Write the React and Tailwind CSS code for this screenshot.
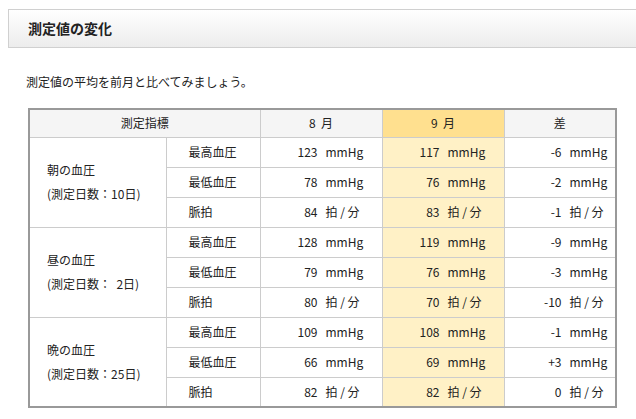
const groups = [
  { name: "朝の血圧", days: "(測定日数：10日)", rows: [
    ["最高血圧", "123", "117", "-6", "mmHg"],
    ["最低血圧", "78", "76", "-2", "mmHg"],
    ["脈拍", "84", "83", "-1", "拍 / 分"]] },
  { name: "昼の血圧", days: "(測定日数：\u00a0 2日)", rows: [
    ["最高血圧", "128", "119", "-9", "mmHg"],
    ["最低血圧", "79", "76", "-3", "mmHg"],
    ["脈拍", "80", "70", "-10", "拍 / 分"]] },
  { name: "晩の血圧", days: "(測定日数：25日)", rows: [
    ["最高血圧", "109", "108", "-1", "mmHg"],
    ["最低血圧", "66", "69", "+3", "mmHg"],
    ["脈拍", "82", "82", "0", "拍 / 分"]] },
];

function Val({ n, u }) {
  return (
    <div className="flex items-center">
      <span className="w-[57px] text-right">{n}</span>
      <span className="ml-[8px]">{u}</span>
    </div>
  );
}

export default function App() {
  const font = { fontFamily: '"Noto Sans CJK JP", "Liberation Sans", sans-serif' };
  return (
    <div className="w-[636px] h-[419px] bg-white overflow-hidden text-[12px] text-[#222]" style={font}>
      <div className="ml-[8px] mt-[9px] w-[640px] h-[39px] border border-[#d0d0d0] bg-gradient-to-b from-white to-[#ececec] flex items-center pl-[19px]">
        <span className="text-[14px] font-bold text-[#222]">測定値の変化</span>
      </div>
      <div className="ml-[26px] mt-[26px] h-[16px] leading-[16px]">測定値の平均を前月と比べてみましょう。</div>
      <table className="ml-[28px] mt-[18px] border-collapse border-2 border-[#999] w-[589px]">
        <thead>
          <tr className="h-[28px]">
            <th colSpan={2} className="border border-[#ccc] bg-[#f5f5f5] font-normal w-[231px]">測定指標</th>
            <th className="border border-[#ccc] bg-[#f5f5f5] font-normal w-[122px]">8&nbsp;&nbsp;月</th>
            <th className="border border-[#ccc] bg-[#ffe08f] font-normal w-[122px]">9&nbsp;&nbsp;月</th>
            <th className="border border-[#ccc] bg-[#f5f5f5] font-normal">差</th>
          </tr>
        </thead>
        <tbody>
          {groups.map((g) =>
            g.rows.map((r, i) => (
              <tr key={g.name + i} className="h-[30px]">
                {i === 0 && (
                  <td rowSpan={3} className="border border-[#ccc] pl-[17px] w-[137px] leading-[24px]">
                    <div>{g.name}</div>
                    <div>{g.days}</div>
                  </td>
                )}
                <td className="border border-[#ccc] pl-[22px] w-[94px]">{r[0]}</td>
                <td className="border border-[#ccc]"><Val n={r[1]} u={r[4]} /></td>
                <td className="border border-[#ccc] bg-[#fff1c6]"><Val n={r[2]} u={r[4]} /></td>
                <td className="border border-[#ccc]"><Val n={r[3]} u={r[4]} /></td>
              </tr>
            ))
          )}
        </tbody>
      </table>
    </div>
  );
}
